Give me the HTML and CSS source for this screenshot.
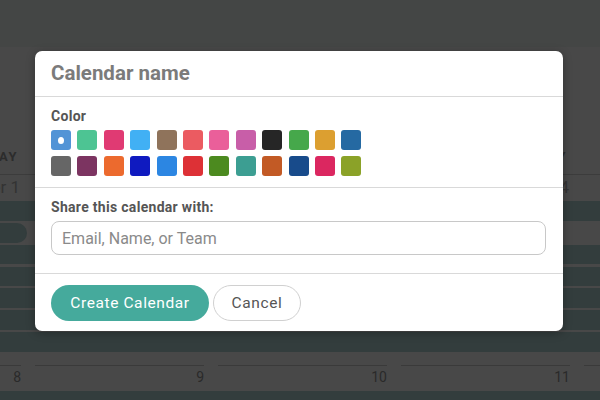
FILE: index.html
```html
<!DOCTYPE html>
<html lang="en">
<head>
    <meta charset="UTF-8" />
    <title>Calendar - New calendar</title>
    <link rel="stylesheet" href="styles.css">
</head>
<body>

<div class="page">
    <div class="topbar"></div>
    <div class="spacer"></div>

    <div class="week day-head">
        <div class="cell">SUNDAY</div>
        <div class="cell">MONDAY</div>
        <div class="cell">TUESDAY</div>
        <div class="cell">WEDNESDAY</div>
        <div class="cell">THURSDAY</div>
    </div>
    <div class="week date-row">
        <div class="cell">November 1</div>
        <div class="cell">2</div>
        <div class="cell">3</div>
        <div class="cell">4</div>
        <div class="cell">4</div>
    </div>

    <div class="band teal h20"></div>
    <div class="band gray h24">
        <div class="event-pill"></div>
    </div>
    <div class="band teal h19"></div>
    <div class="band gray h3"></div>
    <div class="band teal h19"></div>
    <div class="band gray h2"></div>
    <div class="band teal h20"></div>
    <div class="band gray h2"></div>
    <div class="band teal h20"></div>
    <div class="band gray h2"></div>
    <div class="band teal h20"></div>

    <div class="week num-row">
        <div class="cell"><span>8</span></div>
        <div class="cell"><span>9</span></div>
        <div class="cell"><span>10</span></div>
        <div class="cell"><span>11</span></div>
        <div class="cell"><span>12</span></div>
    </div>
    <div class="band teal h9"></div>
</div>

<!-- new calendar dialog -->
<div class="modal">
    <div class="modal-head">
        <div class="modal-title">Calendar name</div>
    </div>

    <div class="section color-section">
        <div class="label">Color</div>
        <div class="swatches" id="swatches"></div>
    </div>

    <div class="section share-section">
        <div class="label">Share this calendar with:</div>
        <input type="text" class="share-input" placeholder="Email, Name, or Team" />
    </div>

    <div class="modal-foot">
        <button class="btn btn-primary">Create Calendar</button>
        <button class="btn btn-plain">Cancel</button>
    </div>
</div>

<script>
    const colors = [
        '#5294d6', '#4dc493', '#e03a73', '#41b0f4', '#8f735b', '#eb5b61',
        '#ea5f9a', '#c85ea8', '#262626', '#46a84b', '#dc9f30', '#2569a2',
        '#666666', '#7c3461', '#ec6a2e', '#0f1ac0', '#2c86e2', '#dd3136',
        '#4c8a1f', '#3c9e92', '#c25a25', '#184b8b', '#db2760', '#8ba228'
    ];

    // Build the colour grid, first one is selected
    const grid = document.getElementById('swatches');
    colors.forEach((c, i) => {
        const sw = document.createElement('div');
        sw.className = i === 0 ? 'swatch selected' : 'swatch';
        sw.style.background = c;
        grid.appendChild(sw);
    });
</script>

</body>
</html>
```

FILE: styles.css
```css
body {
    margin: 0;
    font-family: 'Roboto', 'Liberation Sans', sans-serif;
    background: #484848;
    overflow: hidden;
    width: 600px;
    height: 400px;
}
.page {
    width: 600px;
    height: 400px;
    overflow: hidden;
}
.topbar {
    height: 47px;
    background: #444645;
}
.spacer {
    height: 93px;
}
.week {
    display: grid;
    grid-template-columns: repeat(5, 183px);
    margin-left: -162px;
}
.cell {
    text-align: right;
    padding-right: 30px;
    white-space: nowrap;
    overflow: hidden;
}
.day-head {
    height: 34px;
    border-bottom: 1px solid #3c3c3c;
    font-size: 13px;
    font-weight: 700;
    letter-spacing: 1.5px;
    color: #2c2c2c;
    line-height: 34px;
}
.day-head .cell {
    padding-right: 3px;
}
.date-row {
    height: 26px;
    line-height: 25px;
    font-size: 17px;
    color: #333;
}
.date-row .cell {
    padding-right: 1px;
}
.band {
    position: relative;
}
.teal {
    background: #333d3d;
}
.gray {
    background: #484848;
}
.h2 { height: 2px; }
.h3 { height: 3px; }
.h9 { height: 9px; }
.h19 { height: 19px; }
.h20 { height: 20px; }
.h24 { height: 24px; }
.event-pill {
    position: absolute;
    left: -20px;
    top: 2px;
    width: 47px;
    height: 20px;
    border-radius: 10px;
    background: #333d3d;
}
.num-row {
    height: 39px;
    font-size: 14px;
    color: #2a2a2a;
}
.num-row .cell {
    padding: 13px 0 0 14px;
}
.num-row .cell span {
    display: block;
    border-top: 1px solid #3a3a3a;
    padding-top: 3px;
    line-height: 16px;
}

/* dialog */
.modal {
    position: absolute;
    left: 35px;
    top: 51px;
    width: 528px;
    height: 280px;
    background: #fff;
    border-radius: 7px;
    box-shadow: 0 2px 10px rgba(0, 0, 0, 0.3);
    overflow: hidden;
}
.modal-head {
    height: 45px;
    padding: 0 16px;
    border-bottom: 1px solid #d9d9d9;
}
.modal-title {
    font-size: 20.5px;
    font-weight: 700;
    color: #7b7b7b;
    line-height: 45px;
}
.section {
    padding: 0 16px;
    border-bottom: 1px solid #d9d9d9;
}
.label {
    font-size: 14px;
    letter-spacing: 0.3px;
    font-weight: 700;
    color: #555;
    line-height: 16px;
}
.color-section {
    height: 91px;
    box-sizing: border-box;
}
.color-section .label {
    padding-top: 11px;
}
.swatches {
    display: grid;
    grid-template-columns: repeat(12, 20px);
    column-gap: 6.4px;
    row-gap: 6px;
    margin-top: 6px;
}
.swatch {
    width: 20px;
    height: 20px;
    border-radius: 3px;
    position: relative;
}
.swatch.selected::after {
    content: '';
    position: absolute;
    left: 7px;
    top: 7px;
    width: 6px;
    height: 7px;
    border-radius: 50%;
    background: #fff;
}
.share-section {
    height: 86px;
    box-sizing: border-box;
    padding-top: 11px;
}
.share-input {
    display: block;
    margin-top: 6px;
    width: 495px;
    height: 34px;
    box-sizing: border-box;
    border: 1px solid #c8c8c8;
    border-radius: 8px;
    padding: 0 10px;
    font-family: inherit;
    font-size: 16px;
    color: #333;
    outline: none;
}
.share-input::placeholder {
    color: #8a8a8a;
}
.modal-foot {
    display: flex;
    gap: 4px;
    padding: 11px 16px 0;
}
.btn {
    height: 36px;
    border-radius: 18px;
    font-family: inherit;
    font-size: 15.5px;
    letter-spacing: 0.6px;
    cursor: pointer;
}
.btn-primary {
    width: 158px;
    background: #45aa9c;
    border: none;
    color: #fff;
}
.btn-plain {
    width: 88px;
    background: #fff;
    border: 1px solid #d0d0d0;
    color: #555;
}
```
